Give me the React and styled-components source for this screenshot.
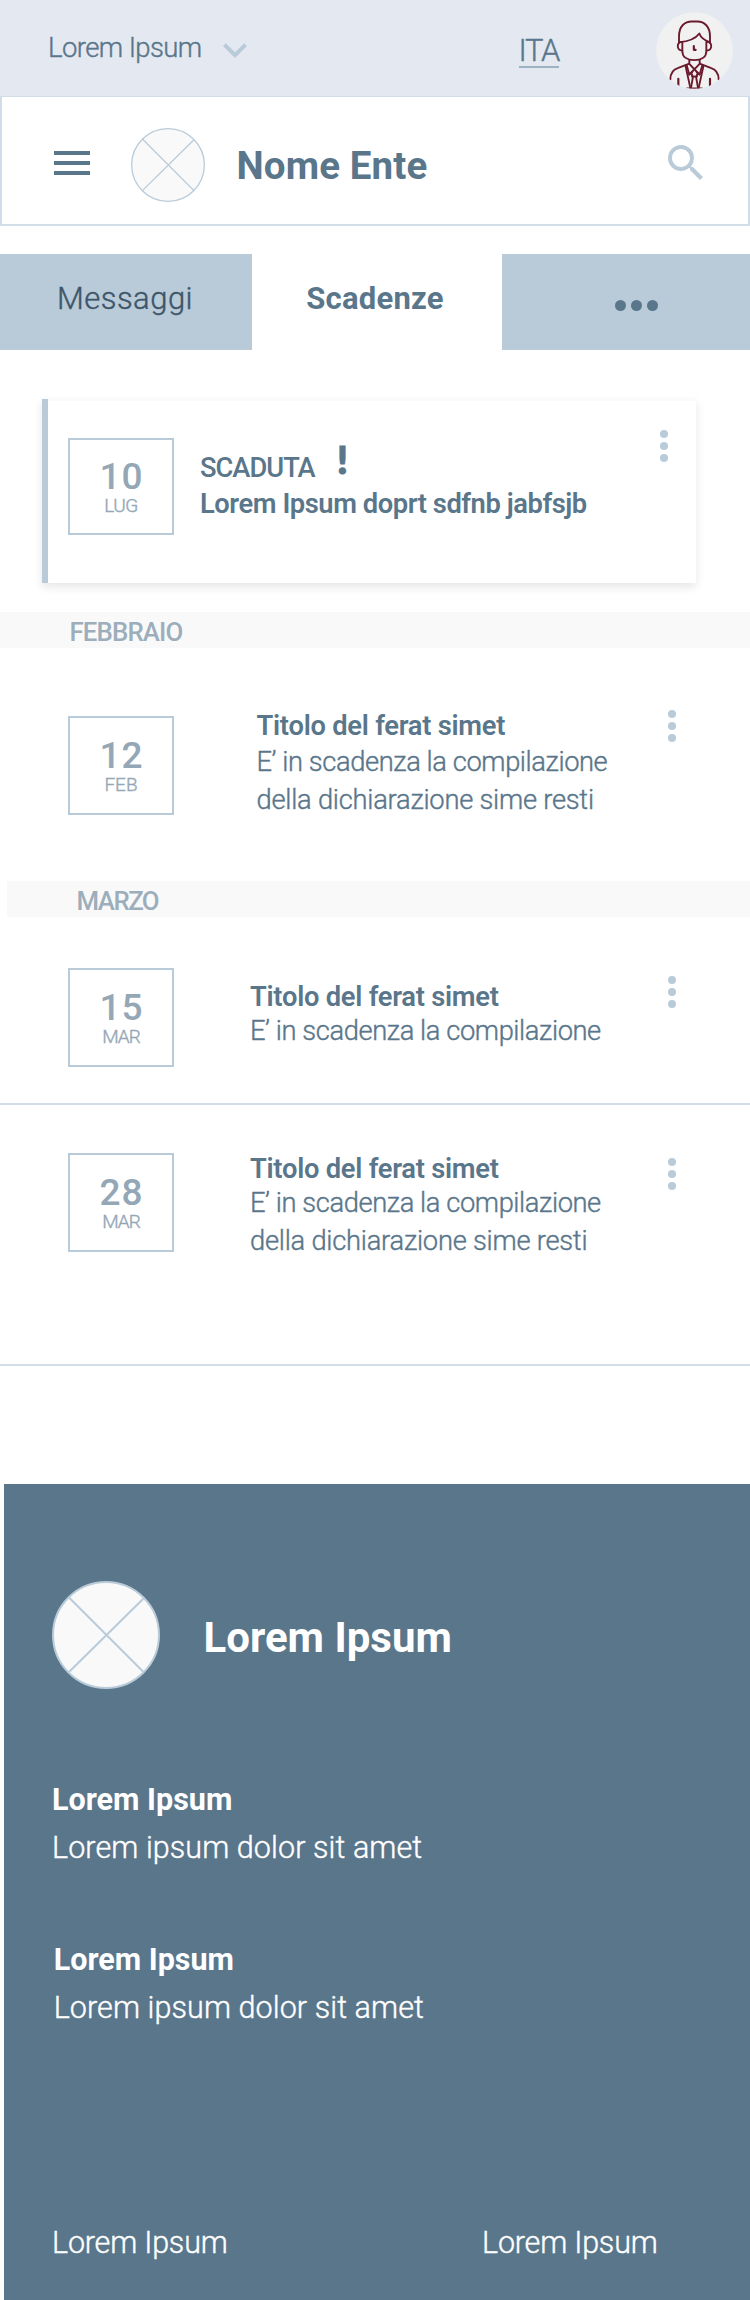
import React from "react";
import styled, { createGlobalStyle } from "styled-components";
import { MdExpandMore, MdMenu, MdSearch } from "react-icons/md";

const color = {
  slate: "#5a768b",
  ink: "#3d566a",
  mist: "#b9cbd9",
  line: "#d1dde8",
  faded: "#94a7b6",
  month: "#9caebb",
  bar: "#e4e9f1",
  paper: "#f9f9f9",
};

const GlobalStyle = createGlobalStyle`
  * { box-sizing: border-box; }
  body {
    margin: 0;
    background: #fff;
    font-family: Roboto, "Liberation Sans", sans-serif;
    color: ${color.slate};
  }
`;

const Page = styled.div`
  width: 750px;
  height: 2300px;
  overflow: hidden;
`;

/* Without $weight a label uses the light cut, thickened slightly to a book weight. */
const Label = styled.span`
  display: block;
  white-space: nowrap;
  font-size: ${(p) => p.$size}px;
  line-height: ${(p) => p.$line}px;
  font-weight: ${(p) => p.$weight || 300};
  -webkit-text-stroke: ${(p) => (p.$weight ? "0" : "0.4px")};
  letter-spacing: ${(p) => p.$track || 0}px;
  color: ${(p) => p.$color || "inherit"};
`;

/* top bar */
const TopBar = styled.div`
  display: flex;
  align-items: flex-start;
  height: 96px;
  background: ${color.bar};
`;
const OrgSelect = styled.div`
  display: flex;
  align-items: flex-start;
  padding: 31.5px 0 0 48px;
  svg {
    width: 48px;
    height: 48px;
    margin: -6px 0 0 9.5px;
    color: ${color.mist};
  }
`;
const Language = styled.a`
  margin: 36px 97.5px 0 auto;
  width: 40px;
  border-bottom: 2px solid #9db3c2;
`;
const AvatarSvg = styled.svg`
  display: block;
  width: 77px;
  height: 77px;
  margin: 11.5px 17px 0 0;
`;

/* header */
const Header = styled.header`
  display: flex;
  align-items: flex-start;
  height: 130px;
  border: 2px solid ${color.line};
  border-top-width: 1px;
`;
const MenuButton = styled.div`
  margin: 42px 0 0 46px;
  height: 48px;
  svg { width: 48px; height: 48px; display: block; }
`;
const SearchButton = styled(MenuButton)`
  margin: 42px 38px 0 auto;
  color: ${color.mist};
`;
const LogoSvg = styled.svg`
  display: block;
  flex: none;
  width: ${(p) => p.$size}px;
  height: ${(p) => p.$size}px;
`;
const HeaderLogo = styled.div`
  margin: 31px 0 0 35px;
`;
const HeaderTitle = styled.div`
  margin: 46px 0 0 31.5px;
`;

/* tabs */
const Tabs = styled.nav`
  display: grid;
  grid-template-columns: 252px 250px 248px;
  height: 96px;
  margin-top: 28px;
`;
const Tab = styled.div`
  display: flex;
  justify-content: center;
  padding: 24px ${(p) => p.$nudge || 0}px 0 0;
  background: ${(p) => (p.$active ? "#fff" : color.mist)};
`;
const MoreDots = styled.div`
  display: flex;
  gap: 5px;
  margin: 21.5px 0 0 20px;
  i {
    width: 11px;
    height: 11px;
    border-radius: 50%;
    background: ${color.slate};
  }
`;

/* deadlines */
const Card = styled.section`
  display: flex;
  width: 654px;
  height: 184px;
  margin: 49px 0 0 42px;
  padding-top: 2px;
  border-left: 6px solid ${color.mist};
  background: #fafafa;
  box-shadow: 0 4px 9px rgba(0, 0, 0, 0.1);
`;
const CardBody = styled.div`
  display: flex;
  align-items: flex-start;
  width: 100%;
  padding-left: 20px;
  background: #fff;
`;
const Kebab = styled.div`
  display: flex;
  flex-direction: column;
  gap: 4px;
  margin: ${(p) => p.$top}px ${(p) => p.$right}px 0 auto;
  i {
    width: 8px;
    height: 8px;
    border-radius: 50%;
    background: ${color.mist};
  }
`;
const DateBox = styled.div`
  width: 106px;
  height: ${(p) => p.$height || 99}px;
  margin-top: ${(p) => p.$top}px;
  padding-top: ${(p) => (p.$height ? 19 : 20)}px;
  border: 2px solid ${color.mist};
  text-align: center;
  color: ${color.faded};
`;
const Day = styled(Label)`
  text-indent: 1px;
`;
const Copy = styled.div`
  margin: ${(p) => p.$top}px 0 0 ${(p) => p.$left}px;
`;
const StatusLine = styled.div`
  display: flex;
  align-items: flex-start;
  height: 34.6px;
`;
const Alert = styled(Label)`
  font-family: Lato, sans-serif;
  margin: -9px 0 0 22.5px;
  -webkit-text-stroke: 1.2px ${color.slate};
`;
const MonthBand = styled.div`
  height: 36px;
  margin: ${(p) => p.$top || 0}px 0 0 ${(p) => p.$left || 0}px;
  padding: 2px 0 0 69.5px;
  background: ${color.paper};
`;
const EventRow = styled.section`
  display: flex;
  align-items: flex-start;
  height: ${(p) => p.$height}px;
  padding-left: 68px;
  border-bottom: ${(p) => (p.$ruled ? `2px solid ${color.line}` : "none")};
`;

/* footer */
const Footer = styled.footer`
  height: 816px;
  margin: 118px 0 0 4px;
  padding: 97px 0 0 48px;
  background: ${color.slate};
  color: #fff;
`;
const FooterBrand = styled.div`
  display: flex;
  align-items: flex-start;
  height: 108px;
  gap: 43.5px;
`;
const FooterTitle = styled.div`
  margin-top: 31.5px;
`;
const FooterBlock = styled.div`
  margin: ${(p) => p.$top}px 0 0 ${(p) => p.$left || 0}px;
`;
const FooterLinks = styled.div`
  display: grid;
  grid-template-columns: 430px auto;
  margin-top: 187.5px;
`;

function Placeholder({ size, weight }) {
  return (
    <LogoSvg $size={size} viewBox="0 0 108 108">
      <circle cx="54" cy="54" r={54 - weight / 2} fill={color.paper} />
      <path d="M17 16.5 91.5 91M91.5 17.5 17 91" stroke={color.mist} strokeWidth={weight} />
      <circle cx="54" cy="54" r={54 - weight / 2} fill="none" stroke={color.mist} strokeWidth={weight} />
    </LogoSvg>
  );
}

function Avatar() {
  return (
    <AvatarSvg viewBox="33 19 231 230" fill="none" stroke="#6b1a2e" strokeWidth="5.6" strokeLinecap="round" strokeLinejoin="round">
      <clipPath id="disc"><circle cx="148.5" cy="134" r="115" /></clipPath>
      <circle cx="148.5" cy="134" r="115" fill="#f1f1f1" stroke="none" />
      <g clipPath="url(#disc)">
        <path d="M102 110V92C102 60 120 47 140 47H157C178 47 195 62 195 92V110" />
        <path d="M103 109C130 107 152 98 163 83C168 97 180 104 194 109" />
        <path d="M112 108V136C112 153 126 163 148 163S184 153 184 136V108" />
        <path d="M111 108C94 109 94 133 112 134M186 108C203 109 203 133 185 134" />
        <path d="M146.5 121V132H152" strokeWidth="6.5" />
        <path d="M133 162V174L163 206M164 162V174L133 206" />
        <path d="M76 221C76 202 86 190 100 186L131 174M221 221C221 202 211 190 197 186L166 174" />
        <path d="M125 178 133 206 142 198M172 178 164 206 155 198" />
        <path d="M122 182 136 246M175 182 161 246" />
        <path d="M141 205V212H156V205M144 212 138 246M153 212 159 246" />
        <path d="M100 219V240M195 219V240" strokeWidth="6.5" />
        <path d="M126 248H171" />
      </g>
    </AvatarSvg>
  );
}

function Dots({ top, right = 74 }) {
  return <Kebab $top={top} $right={right}><i /><i /><i /></Kebab>;
}

function DateBadge({ day, month, top, height, track }) {
  return (
    <DateBox $top={top} $height={height}>
      <Day $size={37} $line={36} $weight={500} $track={1}>{day}</Day>
      <Label $size={19} $line={22} $track={track}>{month}</Label>
    </DateBox>
  );
}

function Event({ height, ruled, day, month, boxTop, copyTop, copyLeft, titleLine, dotsTop, track, lines }) {
  return (
    <EventRow $height={height} $ruled={ruled}>
      <DateBadge day={day} month={month} top={boxTop} track={track} />
      <Copy $top={copyTop} $left={copyLeft}>
        <Label $size={27.3} $line={titleLine} $weight={600} $track={-0.25}>Titolo del ferat simet</Label>
        {lines.map((t, i) => (
          <Label key={t} $size={27.3} $line={38} $track={i ? -0.24 : -0.41}>{t}</Label>
        ))}
      </Copy>
      <Dots top={dotsTop} />
    </EventRow>
  );
}

const LINE_1 = "E’ in scadenza la compilazione";
const LINE_2 = "della dichiarazione sime resti";

export default function App() {
  return (
    <Page>
      <GlobalStyle />
      <TopBar>
        <OrgSelect>
          <Label $size={27.5} $line={32} $track={-0.6}>Lorem Ipsum</Label>
          <MdExpandMore />
        </OrgSelect>
        <Language>
          <Label $size={31} $line={30} $track={-1.3}>ITA</Label>
        </Language>
        <Avatar />
      </TopBar>

      <Header>
        <MenuButton><MdMenu /></MenuButton>
        <HeaderLogo><Placeholder size={74} weight={1.9} /></HeaderLogo>
        <HeaderTitle>
          <Label $size={38.5} $line={46} $weight={700} $track={0.14}>Nome Ente</Label>
        </HeaderTitle>
        <SearchButton><MdSearch /></SearchButton>
      </Header>

      <Tabs>
        <Tab $nudge={2}><Label $size={31} $line={42} $track={0.47} $color={color.ink}>Messaggi</Label></Tab>
        <Tab $active $nudge={4}><Label $size={31} $line={42} $weight={700} $track={0.25}>Scadenze</Label></Tab>
        <Tab><MoreDots><i /><i /><i /></MoreDots></Tab>
      </Tabs>

      <Card>
        <CardBody>
          <DateBadge day="10" month="LUG" top={37} height={97} track={-0.5} />
          <Copy $top={49.7} $left={26}>
            <StatusLine>
              <Label $size={27.3} $line={34.6} $weight={500} $track={-1}>SCADUTA</Label>
              <Alert $size={38} $line={34.6} $weight={900}>!</Alert>
            </StatusLine>
            <Label $size={27.3} $line={38} $weight={600} $track={-0.43}>Lorem Ipsum doprt sdfnb jabfsjb</Label>
          </Copy>
          <Dots top={29} right={28.5} />
        </CardBody>
      </Card>

      <MonthBand $top={29}>
        <Label $size={25.8} $line={36} $weight={500} $track={-0.85} $color={color.month}>FEBBRAIO</Label>
      </MonthBand>
      <Event height={233} day="12" month="FEB" boxTop={68} copyTop={60.7} copyLeft={82.5} titleLine={34} dotsTop={62} lines={[LINE_1, LINE_2]} />

      <MonthBand $left={7}>
        <Label $size={25.8} $line={36} $weight={500} $track={-1.5} $color={color.month}>MARZO</Label>
      </MonthBand>
      <Event height={188} ruled day="15" month="MAR" boxTop={51} copyTop={65.5} copyLeft={76} titleLine={29} dotsTop={58.7} track={-1} lines={[LINE_1]} />
      <Event height={261} ruled day="28" month="MAR" boxTop={48} copyTop={49.5} copyLeft={76} titleLine={29} dotsTop={53} track={-1} lines={[LINE_1, LINE_2]} />

      <Footer>
        <FooterBrand>
          <Placeholder size={108} weight={2} />
          <FooterTitle>
            <Label $size={42} $line={50} $weight={700}>Lorem Ipsum</Label>
          </FooterTitle>
        </FooterBrand>
        <FooterBlock $top={86.6}>
          <Label $size={30.5} $line={48} $weight={700}>Lorem Ipsum</Label>
          <Label $size={30.5} $line={48} $track={0.08}>Lorem ipsum dolor sit amet</Label>
        </FooterBlock>
        <FooterBlock $top={64} $left={1.7}>
          <Label $size={30.5} $line={48} $weight={700}>Lorem Ipsum</Label>
          <Label $size={30.5} $line={48} $track={0.08}>Lorem ipsum dolor sit amet</Label>
        </FooterBlock>
        <FooterLinks>
          <Label $size={30.5} $line={48} $track={-0.2}>Lorem Ipsum</Label>
          <Label $size={30.5} $line={48} $track={-0.2}>Lorem Ipsum</Label>
        </FooterLinks>
      </Footer>
    </Page>
  );
}
